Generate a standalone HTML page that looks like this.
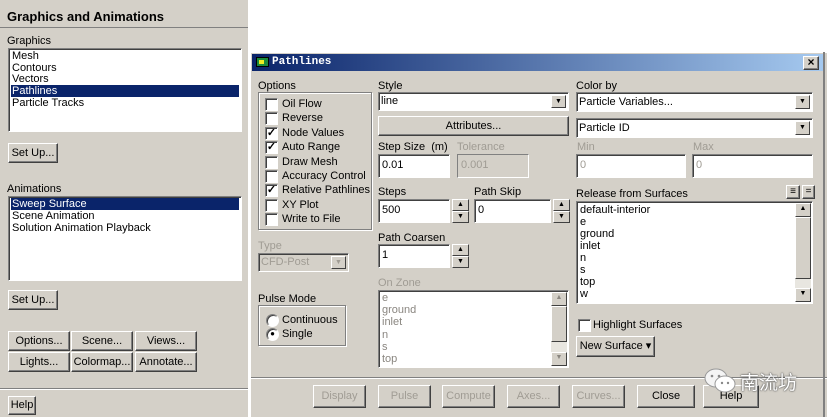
<!DOCTYPE html>
<html><head><meta charset="utf-8"><style>
*{margin:0;padding:0;box-sizing:border-box}
body{width:827px;height:417px;background:#fff;position:relative;overflow:hidden;font-family:Tahoma,"Liberation Sans",sans-serif;font-size:11px;color:#000}
.a{position:absolute}
.bg{background:#d4d0c8}
.sunk{position:absolute;background:#fff;border:1px solid;border-color:#808080 #fff #fff #808080;box-shadow:inset 1px 1px 0 #404040}
.btn{position:absolute;background:#d4d0c8;border:1px solid;border-color:#fff #404040 #404040 #fff;box-shadow:inset -1px -1px 0 #808080;text-align:center;white-space:nowrap}
.dis{color:#a09c94}
.grp{position:absolute;border:1px solid #808080;box-shadow:1px 1px 0 #fff,inset 1px 1px 0 #fff}
.cb{position:absolute;width:13px;height:13px;background:#fff;border:1px solid;border-color:#808080 #fff #fff #808080;box-shadow:inset 1px 1px 0 #404040;font-size:11px;line-height:10px;text-align:center;font-weight:bold}
.li{position:absolute;left:2px;right:2px;height:12px;line-height:12px;padding-left:1px}
.sel{background:#0a246a;color:#fff}
.dd{position:absolute;right:2px;top:2px;bottom:2px;width:15px;background:#d4d0c8;border:1px solid;border-color:#fff #404040 #404040 #fff;font-size:7px;text-align:center;line-height:12px}
.sp{position:absolute;width:17px;background:#d4d0c8}
.sp div{height:50%;border:1px solid;border-color:#fff #404040 #404040 #fff;font-size:7px;text-align:center;line-height:9px}
</style></head><body>
<!-- left panel -->
<div class="a bg" style="left:0;top:0;width:248px;height:417px"></div>
<div class="a" style="left:7px;top:9px;font-weight:bold;font-size:13px">Graphics and Animations</div>
<div class="a" style="left:0;top:27px;width:248px;height:1px;background:#808080"></div>
<div class="a" style="left:7px;top:35px">Graphics</div>
<div class="sunk" style="left:8px;top:48px;width:234px;height:84px">
<div class="li" style="top:1px">Mesh</div><div class="li" style="top:13px">Contours</div><div class="li" style="top:24px">Vectors</div><div class="li sel" style="top:36px">Pathlines</div><div class="li" style="top:48px">Particle Tracks</div></div>
<div class="btn" style="left:8px;top:143px;width:50px;height:20px;line-height:18px">Set Up...</div>
<div class="a" style="left:7px;top:183px">Animations</div>
<div class="sunk" style="left:8px;top:196px;width:234px;height:85px">
<div class="li sel" style="top:1px">Sweep Surface</div><div class="li" style="top:13px">Scene Animation</div><div class="li" style="top:25px">Solution Animation Playback</div></div>
<div class="btn" style="left:8px;top:290px;width:50px;height:20px;line-height:18px">Set Up...</div>
<div class="btn" style="left:8px;top:331px;width:62px;height:20px;line-height:18px">Options...</div>
<div class="btn" style="left:71px;top:331px;width:62px;height:20px;line-height:18px">Scene...</div>
<div class="btn" style="left:135px;top:331px;width:62px;height:20px;line-height:18px">Views...</div>
<div class="btn" style="left:8px;top:352px;width:62px;height:20px;line-height:18px">Lights...</div>
<div class="btn" style="left:71px;top:352px;width:62px;height:20px;line-height:18px">Colormap...</div>
<div class="btn" style="left:135px;top:352px;width:62px;height:20px;line-height:18px">Annotate...</div>
<div class="a" style="left:0;top:388px;width:248px;height:1px;background:#808080"></div>
<div class="a" style="left:0;top:389px;width:248px;height:1px;background:#fff"></div>
<div class="btn" style="left:8px;top:396px;width:28px;height:19px;line-height:17px">Help</div>

<!-- dialog -->
<div class="a bg" style="left:250px;top:52px;width:577px;height:365px;border-left:1px solid #fff;border-top:1px solid #fff"></div>
<div class="a" style="left:252px;top:54px;width:573px;height:17px;background:linear-gradient(90deg,#0a246a,#a6caf0)"></div>
<div class="a" style="left:256px;top:57px;width:13px;height:10px;background:#1a8a3a;border:1px solid #000"><div style="margin:2px;width:5px;height:4px;background:#ee2"></div></div>
<div class="a" style="left:272px;top:56px;color:#fff;font-weight:bold;font-family:'Liberation Mono',monospace;font-size:11px">Pathlines</div>
<div class="btn" style="left:803px;top:56px;width:16px;height:14px;line-height:11px;font-weight:bold;font-size:12px">×</div>

<div class="a" style="left:258px;top:80px">Options</div>
<div class="grp" style="left:258px;top:92px;width:114px;height:138px"></div>
<div class="cb" style="left:265px;top:98px"></div><div class="a" style="left:282px;top:98px">Oil Flow</div>
<div class="cb" style="left:265px;top:112px"></div><div class="a" style="left:282px;top:112px">Reverse</div>
<div class="cb" style="left:265px;top:127px">✓</div><div class="a" style="left:282px;top:127px">Node Values</div>
<div class="cb" style="left:265px;top:141px">✓</div><div class="a" style="left:282px;top:141px">Auto Range</div>
<div class="cb" style="left:265px;top:156px"></div><div class="a" style="left:282px;top:156px">Draw Mesh</div>
<div class="cb" style="left:265px;top:170px"></div><div class="a" style="left:282px;top:170px">Accuracy Control</div>
<div class="cb" style="left:265px;top:184px">✓</div><div class="a" style="left:282px;top:184px">Relative Pathlines</div>
<div class="cb" style="left:265px;top:199px"></div><div class="a" style="left:282px;top:199px">XY Plot</div>
<div class="cb" style="left:265px;top:213px"></div><div class="a" style="left:282px;top:213px">Write to File</div>
<div class="a dis" style="left:258px;top:240px">Type</div>
<div class="sunk" style="left:258px;top:253px;width:91px;height:19px;background:#d4d0c8"><div class="a dis" style="left:2px;top:2px">CFD-Post</div><div class="dd dis">▼</div></div>
<div class="a" style="left:258px;top:293px">Pulse Mode</div>
<div class="grp" style="left:258px;top:305px;width:88px;height:41px"></div>
<div class="cb" style="left:266px;top:314px;border-radius:50%"></div><div class="a" style="left:282px;top:314px">Continuous</div>
<div class="cb" style="left:266px;top:328px;border-radius:50%;font-size:8px">●</div><div class="a" style="left:282px;top:328px">Single</div>

<div class="a" style="left:378px;top:80px">Style</div>
<div class="sunk" style="left:378px;top:92px;width:191px;height:19px"><div class="a" style="left:2px;top:2px">line</div><div class="dd">▼</div></div>
<div class="btn" style="left:378px;top:116px;width:191px;height:20px;line-height:18px">Attributes...</div>
<div class="a" style="left:378px;top:141px">Step Size &nbsp;(m)</div>
<div class="a dis" style="left:457px;top:141px">Tolerance</div>
<div class="sunk" style="left:378px;top:154px;width:72px;height:24px"><div class="a" style="left:3px;top:4px">0.01</div></div>
<div class="sunk" style="left:457px;top:154px;width:72px;height:24px;background:#d4d0c8;box-shadow:none"><div class="a dis" style="left:3px;top:4px">0.001</div></div>
<div class="a" style="left:378px;top:186px">Steps</div><div class="a" style="left:474px;top:186px">Path Skip</div>
<div class="sunk" style="left:378px;top:199px;width:72px;height:24px"><div class="a" style="left:3px;top:4px">500</div></div>
<div class="sp" style="left:452px;top:199px;height:24px"><div>▲</div><div>▼</div></div>
<div class="sunk" style="left:474px;top:199px;width:77px;height:24px"><div class="a" style="left:3px;top:4px">0</div></div>
<div class="sp" style="left:553px;top:199px;height:24px"><div>▲</div><div>▼</div></div>
<div class="a" style="left:378px;top:232px">Path Coarsen</div>
<div class="sunk" style="left:378px;top:244px;width:72px;height:24px"><div class="a" style="left:3px;top:4px">1</div></div>
<div class="sp" style="left:452px;top:244px;height:24px"><div>▲</div><div>▼</div></div>
<div class="a dis" style="left:378px;top:277px">On Zone</div>
<div class="sunk" style="left:378px;top:290px;width:191px;height:78px;color:#8a8680">
<div class="li" style="top:1px">e</div><div class="li" style="top:13px">ground</div><div class="li" style="top:25px">inlet</div><div class="li" style="top:38px">n</div><div class="li" style="top:50px">s</div><div class="li" style="top:62px">top</div>
<div class="a" style="right:1px;top:1px;width:16px;bottom:1px;background:#e8e6e0"><div class="sp" style="left:0;top:0;height:14px;width:16px"><div style="height:100%">▲</div></div><div class="a" style="left:0;top:14px;width:16px;height:36px;background:#d4d0c8;border:1px solid;border-color:#fff #404040 #404040 #fff"></div><div class="sp" style="left:0;bottom:0;height:14px;width:16px"><div style="height:100%">▼</div></div></div></div>

<div class="a" style="left:576px;top:80px">Color by</div>
<div class="sunk" style="left:576px;top:92px;width:237px;height:20px"><div class="a" style="left:2px;top:3px">Particle Variables...</div><div class="dd">▼</div></div>
<div class="sunk" style="left:576px;top:118px;width:237px;height:20px"><div class="a" style="left:2px;top:3px">Particle ID</div><div class="dd">▼</div></div>
<div class="a dis" style="left:577px;top:141px">Min</div><div class="a dis" style="left:693px;top:141px">Max</div>
<div class="sunk" style="left:576px;top:154px;width:110px;height:24px"><div class="a dis" style="left:3px;top:4px">0</div></div>
<div class="sunk" style="left:692px;top:154px;width:121px;height:24px"><div class="a dis" style="left:3px;top:4px">0</div></div>
<div class="a" style="left:576px;top:188px">Release from Surfaces</div>
<div class="btn" style="left:786px;top:185px;width:14px;height:14px;line-height:11px;font-size:10px;font-weight:bold">≡</div>
<div class="btn" style="left:802px;top:185px;width:13px;height:14px;line-height:11px;font-size:10px">=</div>
<div class="sunk" style="left:576px;top:201px;width:237px;height:103px">
<div class="li" style="top:2px">default-interior</div><div class="li" style="top:14px">e</div><div class="li" style="top:26px">ground</div><div class="li" style="top:38px">inlet</div><div class="li" style="top:50px">n</div><div class="li" style="top:62px">s</div><div class="li" style="top:74px">top</div><div class="li" style="top:86px">w</div>
<div class="a" style="right:1px;top:1px;width:16px;bottom:1px;background:#e8e6e0"><div class="sp" style="left:0;top:0;height:14px;width:16px"><div style="height:100%">▲</div></div><div class="a" style="left:0;top:14px;width:16px;height:62px;background:#d4d0c8;border:1px solid;border-color:#fff #404040 #404040 #fff"></div><div class="sp" style="left:0;bottom:0;height:14px;width:16px"><div style="height:100%">▼</div></div></div></div>
<div class="cb" style="left:578px;top:319px"></div><div class="a" style="left:593px;top:319px">Highlight Surfaces</div>
<div class="btn" style="left:576px;top:336px;width:79px;height:21px;line-height:19px">New Surface ▾</div>

<div class="a" style="left:251px;top:377px;width:576px;height:1px;background:#808080"></div>
<div class="a" style="left:251px;top:378px;width:576px;height:1px;background:#fff"></div>
<div class="btn dis" style="left:313px;top:385px;width:53px;height:23px;line-height:21px">Display</div>
<div class="btn dis" style="left:378px;top:385px;width:53px;height:23px;line-height:21px">Pulse</div>
<div class="btn dis" style="left:442px;top:385px;width:53px;height:23px;line-height:21px">Compute</div>
<div class="btn dis" style="left:507px;top:385px;width:53px;height:23px;line-height:21px">Axes...</div>
<div class="btn dis" style="left:572px;top:385px;width:53px;height:23px;line-height:21px">Curves...</div>
<div class="btn" style="left:637px;top:385px;width:58px;height:23px;line-height:21px">Close</div>
<div class="btn" style="left:703px;top:385px;width:56px;height:23px;line-height:21px">Help</div>
<div class="a" style="left:823px;top:52px;width:2px;height:365px;background:#808080"></div>

<!-- watermark -->
<svg class="a" style="left:703px;top:366px" width="36" height="30" viewBox="0 0 36 30"><ellipse cx="13" cy="12" rx="11" ry="9" fill="#f4f4f4" stroke="#999"/><ellipse cx="22" cy="18" rx="10" ry="8" fill="#fff" stroke="#999"/><circle cx="9" cy="10" r="1.3" fill="#888"/><circle cx="16" cy="10" r="1.3" fill="#888"/><circle cx="19" cy="17" r="1.2" fill="#888"/><circle cx="25" cy="17" r="1.2" fill="#888"/></svg>
<div class="a" style="left:740px;top:368px;font-family:'Noto Sans CJK SC',sans-serif;font-size:19px;color:#fff;text-shadow:0 0 2px #555,0 0 1px #333">南流坊</div>
</body></html>
